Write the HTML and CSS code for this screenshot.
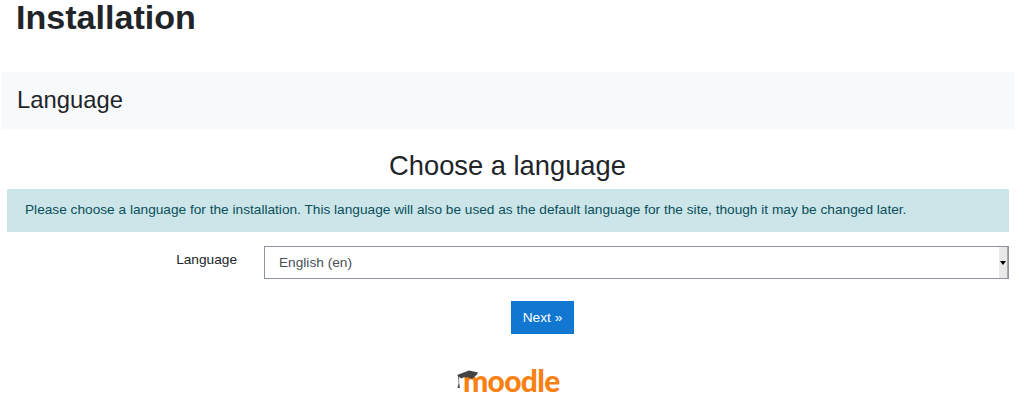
FILE: index.html
```html
<!DOCTYPE html>
<html lang="en">
<head>
    <meta charset="UTF-8">
    <meta name="viewport" content="width=device-width, initial-scale=1.0">
    <title>Installation</title>
    <link rel="stylesheet" href="styles.css">
</head>
<body>
    <h1 class="page-title">Installation</h1>

    <div class="stage-bar">
        <h2>Language</h2>
    </div>

    <h3 class="form-title">Choose a language</h3>

    <div class="alert-info">Please choose a language for the installation. This language will also be used as the default language for the site, though it may be changed later.</div>

    <div class="form-row">
        <label class="form-label">Language</label>
        <div class="fake-select">
            <span>English (en)</span>
            <div class="select-arrow"><i></i></div>
        </div>
    </div>

    <div class="button-row">
        <button class="next-button">Next »</button>
    </div>

    <div class="logo">
        <svg class="logo-hat" width="22" height="22" viewBox="0 0 22 22">
            <path d="M0 6 L12 1.5 L21 3.5 L20 5.5 L15 10 Q9 7 4 9.5 L1.2 7 Z" fill="#444"/>
            <path d="M1 6.5 L1.6 14 L0.4 19 L3 19 L2.2 14 L2 7 Z" fill="#555"/>
        </svg>
        <span class="logo-text">moodle</span>
    </div>
</body>
</html>
```

FILE: styles.css
```css
body {
    margin: 0;
    height: 411px;
    overflow: hidden;
    font-family: "Liberation Sans", Arial, sans-serif;
    font-size: 13.68px;
    color: #212529;
    background-color: white;
}
.page-title {
    margin: 0;
    padding: 0 0 0 16px;
    font-size: 34.1px;
    font-weight: bold;
    line-height: 34px;
}
.stage-bar {
    margin: 38px 10px 0 2px;
    height: 57px;
    display: flex;
    align-items: center;
    padding-left: 15px;
    background-color: #f8f9fa;
}
.stage-bar h2 {
    margin: 0 0 2px 0;
    font-size: 23.8px;
    font-weight: normal;
}
.form-title {
    margin: 22px 0 0 0;
    padding-right: 9px;
    text-align: center;
    font-size: 27.3px;
    font-weight: normal;
    line-height: 30px;
}
.alert-info {
    margin: 8px 15px 0 7px;
    padding: 0 18px;
    height: 43px;
    line-height: 42px;
    background-color: #cce5e8;
    color: #0b4f5c;
    white-space: nowrap;
}
.form-row {
    display: flex;
    margin: 14px 15px 0 0;
}
.form-label {
    width: 237px;
    text-align: right;
    line-height: 27px;
}
.fake-select {
    margin-left: 27px;
    flex: 1;
    height: 31px;
    display: flex;
    justify-content: space-between;
    border: 1px solid #8f959e;
    line-height: 31px;
    padding-left: 14px;
    color: #495057;
}
.select-arrow {
    width: 8px;
    display: flex;
    align-items: center;
    justify-content: center;
    background-color: #e9e9e9;
    border-right: 1px solid #a9a9a9;
}
.select-arrow i {
    width: 0;
    height: 0;
    border-left: 3px solid transparent;
    border-right: 3px solid transparent;
    border-top: 4px solid black;
}
.button-row {
    margin-top: 22px;
    padding-left: 511px;
}
.next-button {
    width: 63px;
    height: 33px;
    border: 1px solid #1177d1;
    background-color: #1177d1;
    color: white;
    font-family: inherit;
    font-size: 13.68px;
    padding: 0;
    cursor: pointer;
}
.logo {
    margin-top: 31px;
    margin-left: 457px;
    display: flex;
    align-items: flex-end;
    height: 30px;
}
.logo-hat {
    margin-right: -16px;
    margin-bottom: 4px;
    position: relative;
    z-index: 1;
}
.logo-text {
    font-family: "Lato", sans-serif;
    font-weight: 900;
    font-size: 30px;
    letter-spacing: -0.7px;
    line-height: 30px;
    color: #f98012;
}
```
